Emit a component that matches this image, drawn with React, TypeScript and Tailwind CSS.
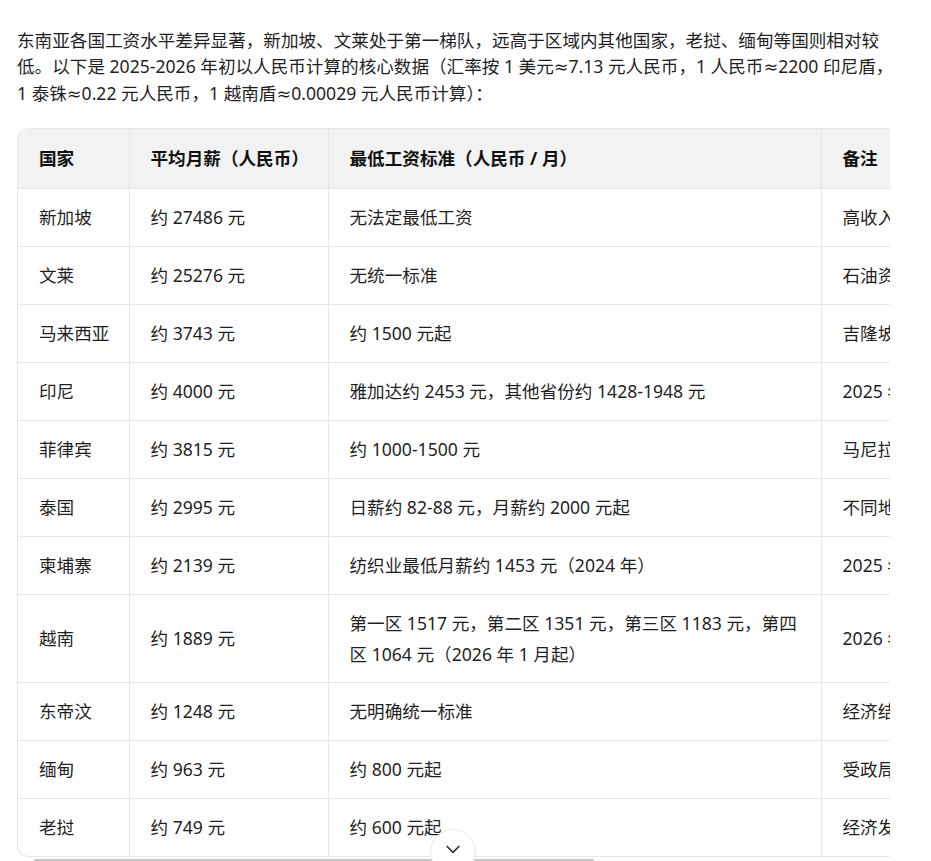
import React from 'react';

// 东南亚工资对比表
const rows: [string, string, React.ReactNode, string][] = [
  ['新加坡', '约 27486 元', '无法定最低工资', '高收入国家，金融、科技行业薪资领先'],
  ['文莱', '约 25276 元', '无统一标准', '石油资源丰富，公共部门待遇优厚'],
  ['马来西亚', '约 3743 元', '约 1500 元起', '吉隆坡等城市薪资明显高于其他地区'],
  ['印尼', '约 4000 元', '雅加达约 2453 元，其他省份约 1428-1948 元', '2025 年各省最低工资平均上调约 6.5%'],
  ['菲律宾', '约 3815 元', '约 1000-1500 元', '马尼拉大都会区最低工资最高'],
  ['泰国', '约 2995 元', '日薪约 82-88 元，月薪约 2000 元起', '不同地区日薪标准存在差异'],
  ['柬埔寨', '约 2139 元', '纺织业最低月薪约 1453 元（2024 年）', '2025 年制衣业最低工资小幅上调'],
  [
    '越南',
    '约 1889 元',
    <>
      第一区 1517 元，第二区 1351 元，第三区 1183 元，第四
      <br />区 1064 元（2026 年 1 月起）
    </>,
    '2026 年起最低工资上调约 7.2%',
  ],
  ['东帝汶', '约 1248 元', '无明确统一标准', '经济结构单一，依赖石油基金'],
  ['缅甸', '约 963 元', '约 800 元起', '受政局影响，经济波动较大'],
  ['老挝', '约 749 元', '约 600 元起', '经济发展水平较低，通胀压力大'],
];

const App = () => {
  return (
    <div
      className="relative h-[861px] overflow-hidden bg-white text-[#1f1f1f]"
      style={{ fontFamily: '"Noto Sans", "DejaVu Sans", "Noto Sans CJK SC", sans-serif' }}
    >
      <div className="pl-[17px] pt-[27px]">
        <p className="w-[900px] text-[17.6px] leading-[26.4px] mb-[22px]">
          东南亚各国工资水平差异显著，新加坡、文莱处于第一梯队，远高于区域内其他国家，老挝、缅甸等国则相对较
          <br />
          低。以下是 2025-2026 年初以人民币计算的核心数据（汇率按 1 美元≈7.13 元人民币，1 人民币≈2200 印尼盾，
          <br />1 泰铢≈0.22 元人民币，1 越南盾≈0.00029 元人民币计算）：
        </p>

        <div className="w-[873px] overflow-hidden rounded-l-[12px] border-y border-l border-[#e6e6e6]">
          <table className="table-fixed border-collapse text-[17.6px] leading-[30.8px] w-[1363px]">
            <colgroup>
              <col className="w-[111px]" />
              <col className="w-[199px]" />
              <col className="w-[493px]" />
              <col className="w-[560px]" />
            </colgroup>
            <thead>
              <tr className="bg-[#f2f2f2]">
                {['国家', '平均月薪（人民币）', '最低工资标准（人民币 / 月）', '备注'].map((h, i) => (
                  <th
                    key={h}
                    className={`h-[59px] pl-[21px] pr-[20px] text-left align-middle font-bold text-[#111] whitespace-nowrap ${
                      i > 0 ? 'border-l border-[#e6e6e6]' : ''
                    }`}
                  >
                    {h}
                  </th>
                ))}
              </tr>
            </thead>
            <tbody>
              {rows.map((r) => (
                <tr key={r[0]} className="border-t border-[#e6e6e6]">
                  <td className="py-[13.1px] pl-[21px] pr-[20px] align-middle whitespace-nowrap">{r[0]}</td>
                  <td className="border-l border-[#e6e6e6] py-[13.1px] pl-[21px] pr-[20px] align-middle whitespace-nowrap">
                    {r[1]}
                  </td>
                  <td className="border-l border-[#e6e6e6] py-[13.1px] pl-[21px] pr-[20px] align-middle whitespace-nowrap">
                    {r[2]}
                  </td>
                  <td className="border-l border-[#e6e6e6] py-[13.1px] pl-[21px] pr-[20px] align-middle whitespace-nowrap">
                    {r[3]}
                  </td>
                </tr>
              ))}
            </tbody>
          </table>
        </div>

        {/* horizontal scroll thumb */}
        <div className="mt-[2px] ml-[17px] h-[3px] w-[560px] rounded-full bg-[#c6c6c6]" />
      </div>

      {/* scroll-down button */}
      <button className="absolute left-[430px] top-[829px] flex h-[46px] w-[46px] items-center justify-center rounded-full border border-[#e8e8e8] bg-white">
        <svg width="20" height="20" viewBox="0 0 24 24" fill="none" stroke="#333" strokeWidth="2" strokeLinecap="round" strokeLinejoin="round" className="-mt-[6px]">
          <path d="M5 9l7 7 7-7" />
        </svg>
      </button>
    </div>
  );
};

export default App;
